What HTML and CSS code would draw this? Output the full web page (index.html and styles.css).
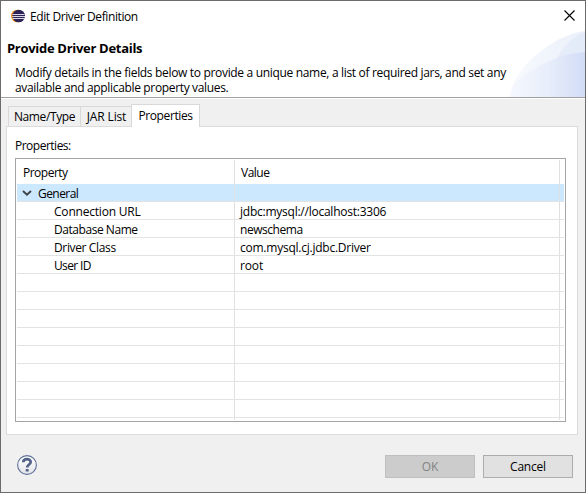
FILE: index.html
```html
<!DOCTYPE html>
<html lang="en">
<head>
<meta charset="utf-8">
<title>Edit Driver Definition</title>
<link rel="stylesheet" href="styles.css">
</head>
<body>
<main class="dialog">
  <header class="banner">
    <svg class="swoosh" width="75" height="66" viewBox="0 0 75 66">
      <defs>
        <linearGradient id="outer"><stop offset="0" stop-color="#f8fafe"/><stop offset="1" stop-color="#eaf0fa"/></linearGradient>
        <linearGradient id="inner"><stop offset="0" stop-color="#f5f8fe"/><stop offset=".5" stop-color="#e8eefa"/><stop offset="1" stop-color="#d1dcf5"/></linearGradient>
      </defs>
      <path d="M0 66C2 38 42 4 75 0V66Z" fill="url(#outer)"/>
      <path d="M46 30C51 18 62 6 75 1V30Z" fill="#dfe8f8" opacity=".65"/>
      <path d="M0 66C1 60 2 57 4 53C24 35 48 23 75 21V66Z" fill="url(#inner)"/>
    </svg>
    <div class="titlebar">
      <svg class="logo" width="14" height="14" viewBox="0 0 14 14">
        <circle cx="6.3" cy="7" r="6.3" fill="#f7941e"/>
        <circle cx="7.7" cy="7" r="6.3" fill="#2c2255"/>
        <path d="M1.5 5.5H13.6M1.2 7.5H14M1.5 9.5H13.6" stroke="#d8d6e6" stroke-width="1"/>
      </svg>
      <span class="caption">Edit Driver Definition</span>
      <svg class="close" width="11" height="11" viewBox="0 0 11 11"><path d="M.5 .5L10.5 10.5M10.5 .5L.5 10.5" stroke="#000" stroke-width="1.1"/></svg>
    </div>
    <h1>Provide Driver Details</h1>
    <p class="desc"><span class="d1">Modify details in the fields below to provide a unique name, a list of required jars, and set any</span><br><span class="d2">available and applicable property values.</span></p>
  </header>
  <nav class="tabs">
    <span class="tab name">Name/Type</span>
    <span class="tab jar">JAR List</span>
    <span class="tab active">Properties</span>
  </nav>
  <section class="pane">
    <div class="label"><span>Properties:</span></div>
    <div class="table">
      <div class="row head"><span class="cell"><span>Property</span></span><span class="cell"><span>Value</span></span><span class="cell"></span></div>
      <div class="row group"><span class="cell"><svg width="10" height="6" viewBox="0 0 10 6"><path d="M1 1L5 4.6L9 1" fill="none" stroke="#404040" stroke-width="1.9"/></svg><span>General</span></span><span class="cell"></span><span class="cell"></span></div>
      <div class="row"><span class="cell"><span class="url">Connection URL</span></span><span class="cell"><span class="jdbc">jdbc:mysql://localhost:3306</span></span><span class="cell"></span></div>
      <div class="row"><span class="cell"><span class="db">Database Name</span></span><span class="cell"><span class="schema">newschema</span></span><span class="cell"></span></div>
      <div class="row"><span class="cell"><span class="cls">Driver Class</span></span><span class="cell"><span class="driver">com.mysql.cj.jdbc.Driver</span></span><span class="cell"></span></div>
      <div class="row"><span class="cell"><span class="uid">User ID</span></span><span class="cell"><span class="root">root</span></span><span class="cell"></span></div>
      <div class="row"><span class="cell"></span><span class="cell"></span><span class="cell"></span></div>
      <div class="row"><span class="cell"></span><span class="cell"></span><span class="cell"></span></div>
      <div class="row"><span class="cell"></span><span class="cell"></span><span class="cell"></span></div>
      <div class="row"><span class="cell"></span><span class="cell"></span><span class="cell"></span></div>
      <div class="row"><span class="cell"></span><span class="cell"></span><span class="cell"></span></div>
      <div class="row"><span class="cell"></span><span class="cell"></span><span class="cell"></span></div>
      <div class="row"><span class="cell"></span><span class="cell"></span><span class="cell"></span></div>
      <div class="row"><span class="cell"></span><span class="cell"></span><span class="cell"></span></div>
      <div class="row tail"><span class="cell"></span><span class="cell"></span><span class="cell"></span></div>
    </div>
  </section>
  <footer class="footer">
    <svg class="help" width="20" height="20" viewBox="0 0 20 20">
      <defs><linearGradient id="ball" x2="0" y2="1"><stop offset="0" stop-color="#fff"/><stop offset="1" stop-color="#e3e5ea"/></linearGradient></defs>
      <circle cx="10" cy="10" r="9.4" fill="url(#ball)" stroke="#5f7199" stroke-width="1.1"/>
      <path d="M6.3 7.3C6.3 3.2 13.7 3 13.7 7C13.7 9.6 10.2 9.5 10.2 12.6" fill="none" stroke="#526188" stroke-width="2.7"/>
      <rect x="8.7" y="14.1" width="3" height="2.5" rx=".7" fill="#526188"/>
    </svg>
    <button class="ok" disabled>OK</button>
    <button>Cancel</button>
  </footer>
</main>
</body>
</html>
```
FILE: styles.css
```css
* { box-sizing: border-box; }
body { margin: 0; font: 12px/15px "Open Sans", "Noto Sans", sans-serif; letter-spacing: -.4px; color: #000; }
.dialog { width: 586px; height: 493px; border: 1px solid #6b6b6b; background: #f0f0f0; display: flex; flex-direction: column; white-space: nowrap; overflow: hidden; }
.banner { position: relative; height: 98px; background: #fff; border-bottom: 1px solid #fff; box-shadow: inset 0 -1px #a0a0a0; flex: none; }
.swoosh { position: absolute; right: 0; bottom: 1px; }
.titlebar { position: relative; display: flex; height: 29px; align-items: center; padding: 0 10px 0 10px; }
.logo { margin-right: 5px; }
.caption { padding-top: 1px; }
.close { margin-left: auto; }
h1 { position: relative; margin: 9px 0 0 6px; font-size: 13px; line-height: 18px; letter-spacing: -.3px; }
.desc { position: relative; margin: 8px 0 0 14px; }
.d1 { letter-spacing: -.325px; }
.d2 { letter-spacing: -.34px; }
.tabs { display: flex; align-items: flex-end; height: 27px; padding-left: 7px; flex: none; }
.tab { height: 20px; border: 1px solid #d9d9d9; border-bottom: 0; line-height: 20px; text-align: center; }
.name { width: 73px; letter-spacing: -.38px; }
.jar { width: 50px; border-left: 0; border-right: 0; letter-spacing: -.15px; padding-left: 1px; }
.active { position: relative; width: 69px; height: 23px; margin-bottom: -1px; background: #fff; line-height: 21px; }
.pane { width: 572px; height: 309px; margin-left: 5px; border: 1px solid #dcdcdc; background: #fff; padding: 11px 0 0 8px; flex: none; }
.label { height: 20px; line-height: 16px; letter-spacing: -.5px; }
.table { width: 551px; height: 264px; border: 1px solid #a5a5a8; padding: 1px; }
.row { display: grid; grid-template-columns: 217px 325px 5px; height: 18px; border-bottom: 1px solid #e3e3e3; }
.cell { display: flex; align-items: center; padding: 1px 0 0 37px; }
.cell + .cell { border-left: 1px solid #e0e0e0; padding-left: 5px; }
.row .cell:last-child { padding: 0; }
.head { height: 24px; border: 0; letter-spacing: -.5px; }
.head .cell { padding-top: 0; }
.head .cell:first-child { padding-left: 6px; }
.head .cell + .cell { padding-left: 6px; }
.group { background: #cce8ff; letter-spacing: -.55px; }
.group .cell:first-child { padding-left: 5px; }
.group svg { margin-right: 6px; }
.url { letter-spacing: -.2px; }
.jdbc, .driver { letter-spacing: -.24px; }
.db, .schema { letter-spacing: -.45px; }
.cls { letter-spacing: -.36px; }
.uid { letter-spacing: -.65px; }
.root { letter-spacing: -.15px; }
.tail { height: 2px; border: 0; }
.tail .cell { padding-top: 0; }
.footer { display: flex; padding: 20px 12px 0 16px; gap: 8px; }
.help { margin-right: auto; }
button { width: 90px; height: 23px; padding: 0; border: 1px solid #adadad; background: #e1e1e1; color: #000; font: inherit; letter-spacing: -.2px; line-height: 21px; }
.ok { background: #ccc; border-color: #bfbfbf; color: #838383; }
```
